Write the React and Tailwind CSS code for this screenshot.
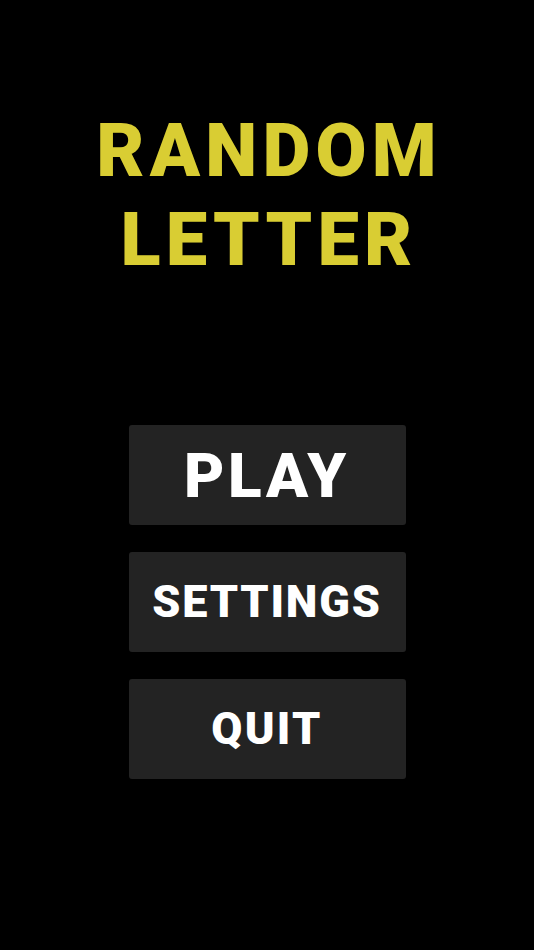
export default function App() {
  const buttons = [
    { label: 'PLAY', cls: 'text-[62px] tracking-[0.06em]' },
    { label: 'SETTINGS', cls: 'text-[45px] tracking-[0.04em]' },
    { label: 'QUIT', cls: 'text-[45px] tracking-[0.05em]' },
  ]

  return (
    <div
      className="w-[534px] h-[950px] bg-black flex flex-col items-center"
      style={{ fontFamily: 'Roboto, "Liberation Sans", sans-serif' }}
    >
      {/* Title */}
      <h1 className="mt-[106px] pl-[4px] text-[74px] leading-[89px] font-black text-[#d9cd33] text-center tracking-[0.07em]">
        RANDOM
        <br />
        LETTER
      </h1>

      {/* Menu */}
      <div className="mt-[141px] flex flex-col gap-[27px]">
        {buttons.map(b => (
          <button
            key={b.label}
            className={`w-[277px] h-[100px] rounded-[3px] bg-[#232323] text-white font-black flex items-center justify-center ${b.cls}`}
          >
            {b.label}
          </button>
        ))}
      </div>
    </div>
  )
}
